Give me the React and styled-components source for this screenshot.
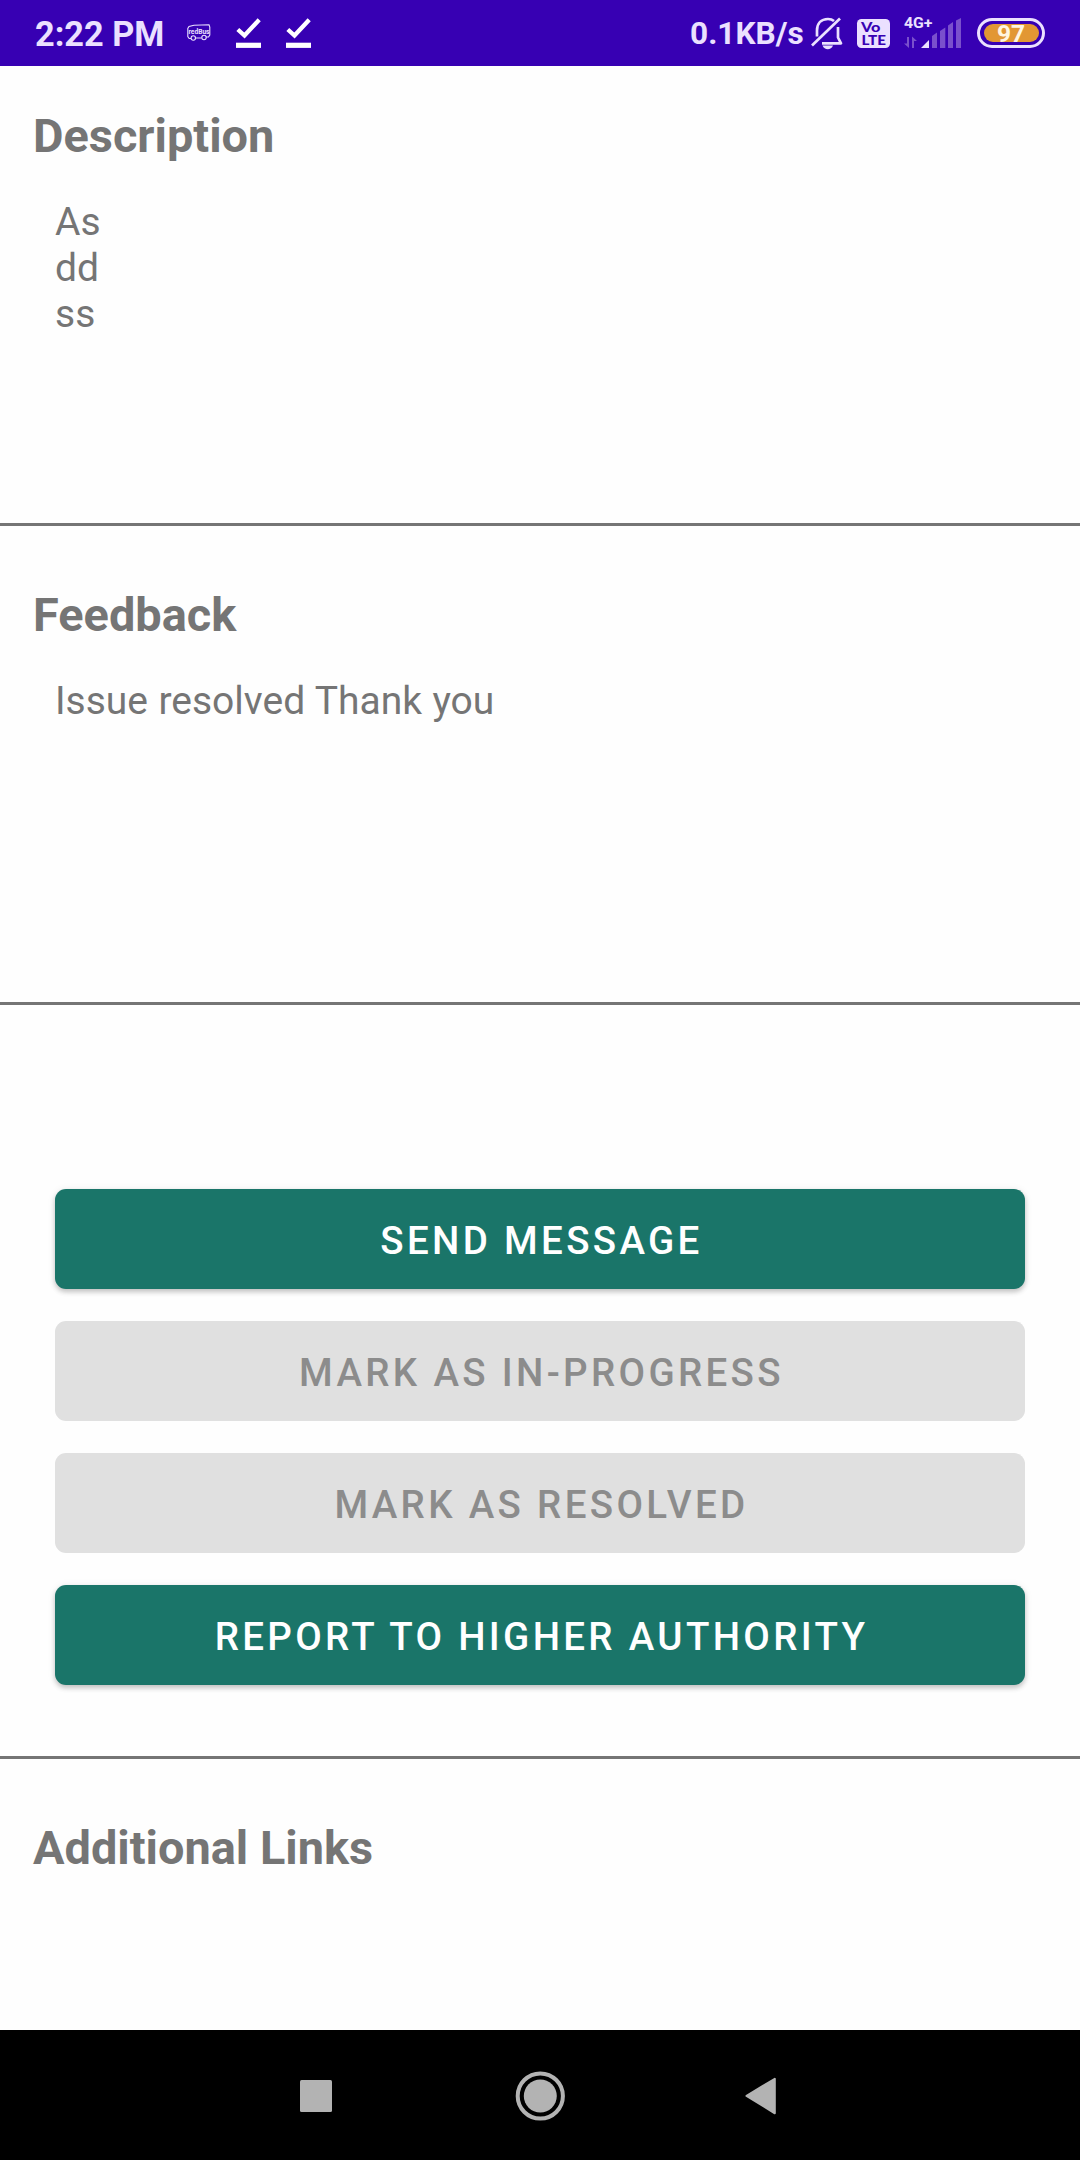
import React from "react";
import styled, { createGlobalStyle } from "styled-components";

const GlobalStyle = createGlobalStyle`
  * { box-sizing: border-box; }
  body { margin: 0; background: #fefefe; font-family: Roboto, "Noto Sans", sans-serif; }
`;

const Screen = styled.div`
  display: flex;
  flex-direction: column;
  width: 1080px;
  height: 2160px;
  background: #fefefe;
  overflow: hidden;
`;

const StatusBar = styled.header`
  display: flex;
  align-items: center;
  justify-content: space-between;
  flex: none;
  height: 66px;
  padding: 0 35px;
  background: #3700b3;
  color: #ebe0ff;
`;

const StatusGroup = styled.div`
  display: flex;
  align-items: center;
  height: 100%;
`;

const StatusText = styled.span`
  font-size: ${(p) => p.$size}px;
  font-weight: 700;
  line-height: 40px;
  width: ${(p) => p.$width}px;
  margin-right: ${(p) => p.$gap}px;
  padding-top: 2px;
  white-space: nowrap;
`;

const Glyph = styled.svg`
  display: block;
  flex: none;
  overflow: visible;
  margin-right: ${(p) => p.$gap || 0}px;
`;

const Content = styled.main`
  display: flex;
  flex-direction: column;
  flex: 1;
  min-height: 0;
`;

const Section = styled.section`
  flex: none;
  height: ${(p) => p.$height}px;
  padding: ${(p) => p.$top}px 33px 0;
  border-bottom: ${(p) => (p.$last ? "none" : "3px solid #757575")};
`;

const Title = styled.h2`
  margin: 0;
  font-size: 46.9px;
  font-weight: 700;
  line-height: 56px;
  color: #757575;
`;

const Body = styled.p`
  margin: 36px 0 0;
  padding-left: 22px;
  font-size: 39px;
  line-height: 45.75px;
  word-spacing: 0.7px;
  color: #757575;
  white-space: pre-line;
`;

const Actions = styled.section`
  display: flex;
  flex-direction: column;
  gap: 32px;
  flex: none;
  height: 754px;
  padding: 184px 55px 0;
  border-bottom: 3px solid #757575;
`;

const Button = styled.button`
  height: 100px;
  padding: 3px 0 0 3px;
  border: 0;
  border-radius: 11px;
  font: 500 38.5px/46px Roboto, "Noto Sans", sans-serif;
  letter-spacing: 3.33px;
  text-transform: uppercase;
  background: #1a7569;
  color: #fff;
  box-shadow: 0 3px 5px rgba(0, 0, 0, 0.2), 0 1px 8px rgba(0, 0, 0, 0.08);

  &:disabled {
    background: #e0e0e0;
    color: #8c8c8c;
    box-shadow: none;
  }
`;

const NavBar = styled.nav`
  display: flex;
  align-items: center;
  flex: none;
  height: 130px;
  padding: 1px 0 0 300px;
  background: #000;
`;

const BusIcon = () => (
  <Glyph $gap={25} width="24" height="18" viewBox="0 0 24 18" fill="none" stroke="#ebe0ff">
    <path d="M4 14.500H2.200L.8 12.500V4.500L2 2.500L7 1.200L22 .8L22.800 3V11L21.500 13H19M14.500 14H8.500" strokeWidth="1.100" />
    <circle cx="6.300" cy="14" r="2.200" strokeWidth="1.100" />
    <circle cx="17" cy="13.500" r="2.200" strokeWidth="1.100" />
    <text x="1.500" y="9.500" fontSize="7.500" fontWeight="700" fill="#ebe0ff" stroke="none" textLength="21" lengthAdjust="spacingAndGlyphs">redBus</text>
  </Glyph>
);

const CheckIcon = ({ gap }) => (
  <Glyph $gap={gap} width="25" height="30" viewBox="0 0 25 30">
    <path d="M1.800 11.500L8.500 17.500L23.200 1.800" fill="none" stroke="#fff" strokeWidth="4.300" />
    <rect x="0" y="24.700" width="25" height="5.200" fill="#fff" />
  </Glyph>
);

const BellOffIcon = () => (
  <Glyph $gap={14} width="32" height="33" viewBox="0 0 32 33" fill="none" stroke="#ebe0ff" strokeWidth="2.700">
    <path d="M6 19.500V13.500C6 6.500 10 2 17 2C19.500 2 21.500 2.700 23 4" />
    <path d="M27 10V20.500L30 26.300H11" strokeLinejoin="round" />
    <path d="M1 28.500L29 1.500" />
    <path d="M11.500 28.500H22C21 31 19 32.200 16.800 32.200C14.500 32.200 12.500 31 11.500 28.500Z" fill="#ebe0ff" stroke="none" />
  </Glyph>
);

const VolteIcon = () => (
  <Glyph $gap={14} width="33" height="29" viewBox="0 0 33 29">
    <rect width="33" height="29" rx="4.500" fill="#ebe0ff" />
    <g fill="#3700b3" fontSize="12.500" fontWeight="900" fontFamily="Lato, Roboto, sans-serif">
      <text x="4" y="13" textLength="19.500" lengthAdjust="spacingAndGlyphs">Vo</text>
      <text x="4.500" y="25.700" textLength="24.500" lengthAdjust="spacingAndGlyphs">LTE</text>
    </g>
  </Glyph>
);

const SignalIcon = () => (
  <Glyph $gap={16} width="57" height="32" viewBox="0 0 57 32" fill="#ebe0ff">
    <text x="0" y="11" fontSize="14.500" fontWeight="700" textLength="28.500" lengthAdjust="spacingAndGlyphs">4G+</text>
    <g fill="#7a50cc">
      <path d="M3 20H5V31L0 26.500H3ZM8 31V19.500L13 24H10V31Z" />
      <path d="M28 19L33 15.500V31H28Z" />
      <path d="M36 14L41.300 10.500V31H36Z" />
      <path d="M44 8.500L49 5V31H44Z" />
      <path d="M52 3.500L57 1V31H52Z" />
    </g>
    <path d="M17 31L25 23V31Z" />
  </Glyph>
);

const BatteryIcon = () => (
  <Glyph width="68" height="30" viewBox="0 0 68 30">
    <rect x="1.500" y="1.500" width="65" height="27" rx="13.500" fill="none" stroke="#ebe0ff" strokeWidth="3" />
    <rect x="7" y="6" width="55" height="18" rx="9" fill="#e29733" />
    <text x="34" y="23.800" textAnchor="middle" fontSize="24.500" fontWeight="700" fill="#fff5e0">97</text>
  </Glyph>
);

const App = () => (
  <>
    <GlobalStyle />
    <Screen>
      <StatusBar>
        <StatusGroup>
          <StatusText $size={34.3} $width={130} $gap={22}>2:22 PM</StatusText>
          <BusIcon />
          <CheckIcon gap={25} />
          <CheckIcon gap={0} />
        </StatusGroup>
        <StatusGroup>
          <StatusText $size={31.6} $width={114} $gap={7}>0.1KB/s</StatusText>
          <BellOffIcon />
          <VolteIcon />
          <SignalIcon />
          <BatteryIcon />
        </StatusGroup>
      </StatusBar>
      <Content>
        <Section $height={460} $top={42}>
          <Title>Description</Title>
          <Body>{"As\ndd\nss"}</Body>
        </Section>
        <Section $height={479} $top={61}>
          <Title>Feedback</Title>
          <Body>Issue resolved Thank you</Body>
        </Section>
        <Actions>
          <Button>Send message</Button>
          <Button disabled>Mark as in-progress</Button>
          <Button disabled>Mark as resolved</Button>
          <Button>Report to higher authority</Button>
        </Actions>
        <Section $height={271} $top={61} $last>
          <Title>Additional Links</Title>
        </Section>
      </Content>
      <NavBar>
        <Glyph $gap={183} width="32" height="32" viewBox="0 0 32 32">
          <rect width="32" height="32" rx="1.500" fill="#b3b3b3" />
        </Glyph>
        <Glyph $gap={179} width="51" height="50" viewBox="0 0 51 50">
          <circle cx="25.300" cy="25" r="22.600" fill="none" stroke="#b3b3b3" strokeWidth="4" />
          <circle cx="25.300" cy="25" r="16.500" fill="#b3b3b3" />
        </Glyph>
        <Glyph width="32" height="38" viewBox="0 0 32 38">
          <path d="M1.500 18.800L29.800 1.800V36.300Z" fill="#b3b3b3" stroke="#b3b3b3" strokeWidth="2" strokeLinejoin="round" />
        </Glyph>
      </NavBar>
    </Screen>
  </>
);

export default App;
